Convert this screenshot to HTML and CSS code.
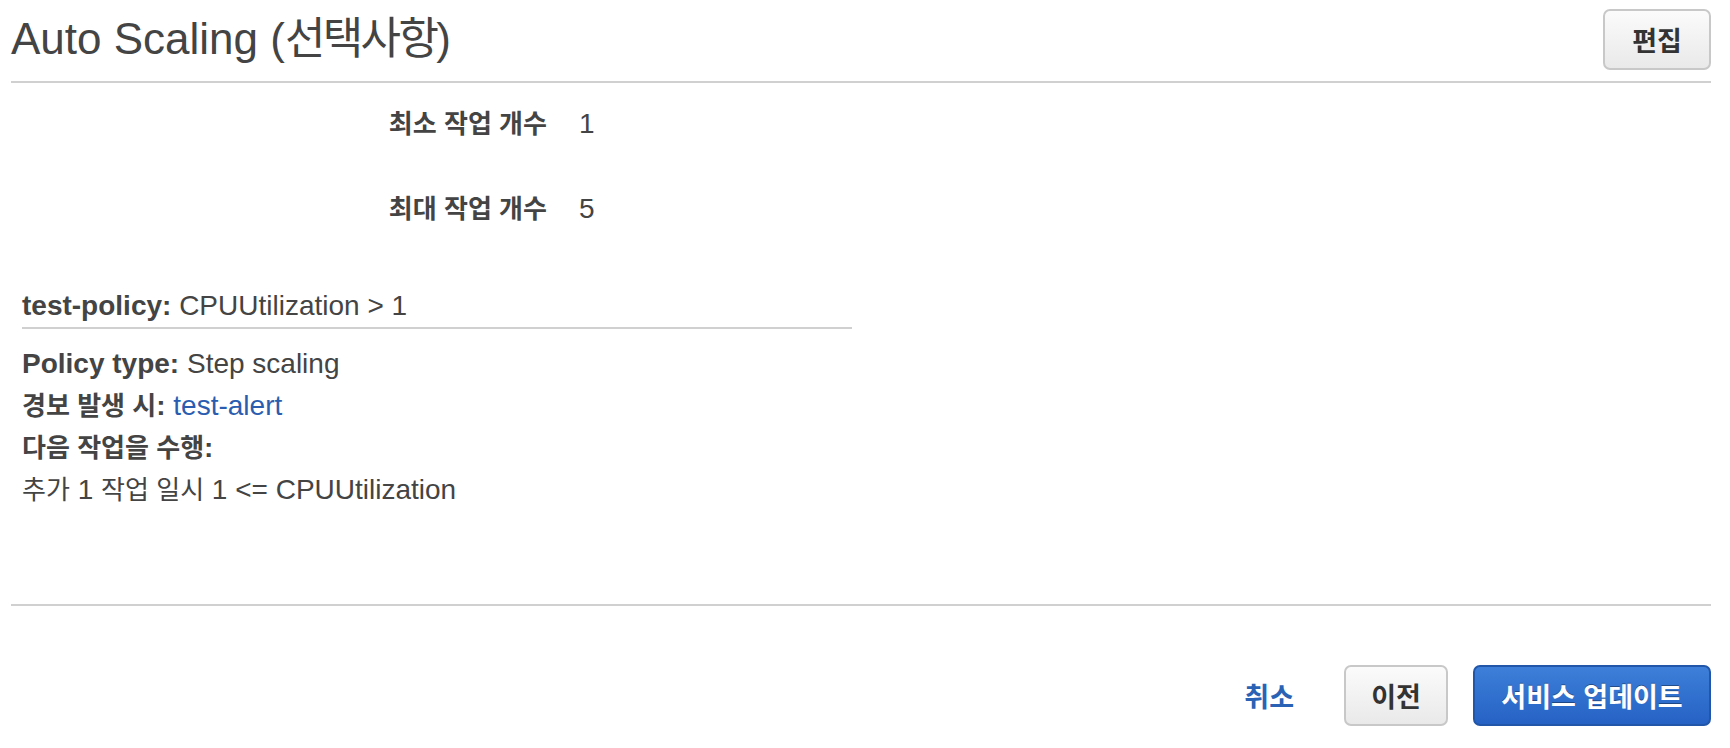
FILE: index.html
```html
<!DOCTYPE html>
<html lang="ko">
<head>
<meta charset="utf-8">
<title>Auto Scaling</title>
<link rel="stylesheet" href="styles.css">
</head>
<body>
<div class="page">
  <header class="header">
    <h1 class="title">Auto Scaling (<span class="title-ko">선택사항</span>)</h1>
    <button class="btn btn-default btn-edit">편집</button>
  </header>

  <section class="scaling">
    <div class="kv">
      <div class="kv-label"><span class="ko">최소 작업 개수</span></div>
      <div class="kv-value">1</div>
    </div>
    <div class="kv">
      <div class="kv-label"><span class="ko">최대 작업 개수</span></div>
      <div class="kv-value">5</div>
    </div>
  </section>

  <section class="policy">
    <div class="policy-head"><b>test-policy:</b> CPUUtilization &gt; 1</div>
    <div class="policy-body">
      <div class="line"><b>Policy type:</b> Step scaling</div>
      <div class="line"><b><span class="ko">경보 발생 시</span>:</b> <a class="link" href="#">test-alert</a></div>
      <div class="line"><b><span class="ko">다음 작업을 수행</span>:</b></div>
      <div class="line"><span class="ko">추가</span> 1 <span class="ko">작업 일시</span> 1 &lt;= CPUUtilization</div>
    </div>
  </section>

  <footer class="footer">
    <a class="cancel" href="#">취소</a>
    <button class="btn btn-default btn-prev">이전</button>
    <button class="btn btn-primary btn-update">서비스 업데이트</button>
  </footer>
</div>
</body>
</html>
```

FILE: styles.css
```css
html, body {
  margin: 0;
  padding: 0;
  background: #fff;
}

body {
  font-family: "Liberation Sans", "Noto Sans CJK KR", sans-serif;
  color: #444;
  font-size: 28px;
}

.page {
  padding: 0 19px 0 11px;
}

.header {
  display: flex;
  justify-content: space-between;
  align-items: center;
  height: 81px;
  border-bottom: 2px solid #d0d0d0;
}

.title {
  margin: 0;
  font-size: 44px;
  font-weight: normal;
  color: #444;
  padding-bottom: 12px;
}

.title-ko {
  letter-spacing: -0.06em;
}

.ko {
  font-size: 0.93em;
}

.btn {
  font-family: "Liberation Sans", "Noto Sans CJK KR", sans-serif;
  font-weight: bold;
  font-size: 27px;
  border-radius: 7px;
  cursor: pointer;
  padding: 0;
}

.btn-default {
  color: #333;
  background: linear-gradient(#fbfbfb, #e9e9e9);
  border: 2px solid #c8c8c8;
}

.btn-edit {
  width: 108px;
  height: 61px;
  margin-bottom: 3px;
}

.kv {
  display: grid;
  grid-template-columns: 536px 1fr;
  column-gap: 32px;
  align-items: center;
  height: 85px;
  padding-bottom: 4px;
  box-sizing: border-box;
  line-height: 42px;
}

.kv-label {
  text-align: right;
  font-weight: bold;
}

.policy {
  padding: 32px 0 0 11px;
}

.policy-head {
  width: 830px;
  height: 42px;
  line-height: 42px;
  border-bottom: 2px solid #d0d0d0;
}

.policy-body {
  padding-top: 14px;
}

.line {
  line-height: 42px;
}

.link {
  color: #2a5db0;
  text-decoration: none;
}

.footer {
  margin-top: 93px;
  border-top: 2px solid #d0d0d0;
  display: flex;
  justify-content: flex-end;
  align-items: center;
  padding-top: 59px;
}

.cancel {
  color: #2a62b5;
  font-weight: bold;
  font-size: 27px;
  text-decoration: none;
  margin-right: 50px;
}

.btn-prev {
  width: 104px;
  height: 61px;
  margin-right: 25px;
}

.btn-primary {
  color: #fff;
  background: linear-gradient(#3d7fd9, #2662c4);
  border: 2px solid #2156a8;
  text-shadow: 0 -1px 0 rgba(0, 0, 0, 0.35);
}

.btn-update {
  width: 238px;
  height: 61px;
}
```
